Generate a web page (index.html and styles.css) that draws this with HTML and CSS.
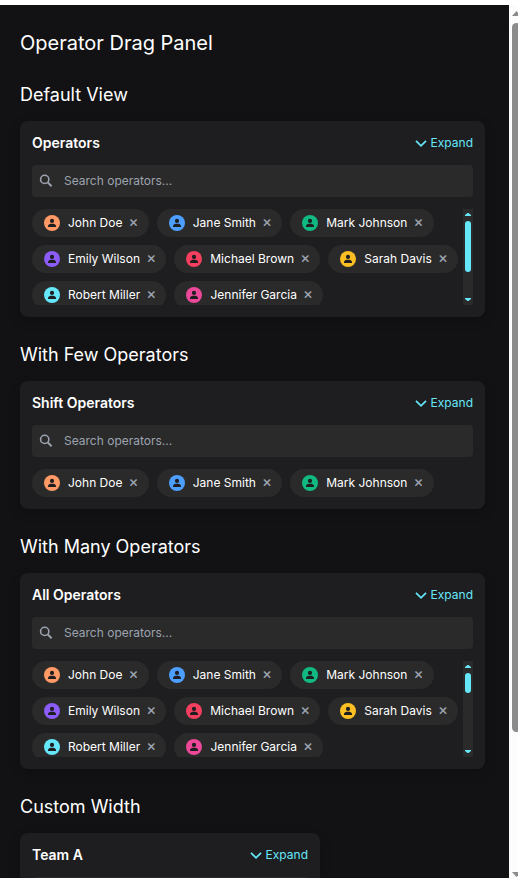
FILE: index.html
```html
<!DOCTYPE html>
<html lang="en">
<head>
<meta charset="utf-8">
<title>Operator Drag Panel</title>
<link rel="stylesheet" href="styles.css">
</head>
<body>
<svg class="defs" aria-hidden="true">
  <symbol id="chevron" viewBox="0 0 12 12"><path d="M1 3.8 6 8.8 11 3.8" fill="none" stroke="currentColor" stroke-width="1.7"/></symbol>
  <symbol id="search" viewBox="0 0 14 14"><circle cx="5.7" cy="5.4" r="4.1" fill="none" stroke="currentColor" stroke-width="1.6"/><path d="M8.7 8.4 12.6 12.3" stroke="currentColor" stroke-width="2"/></symbol>
  <symbol id="person" viewBox="0 0 16 16"><circle cx="8" cy="5.9" r="2.1" fill="#1e1e20"/><path d="M4 12V10.9C4 9.4 6 8.8 8 8.8s4 .6 4 2.1V12z" fill="#1e1e20"/></symbol>
</svg>
<div class="frame">
  <main class="page" id="page">
    <h1>Operator Drag Panel</h1>
  </main>
  <div class="page-scroll"><i class="arrow up"></i><i class="page-thumb"></i><i class="arrow down"></i></div>
</div>
<script src="app.js"></script>
</body>
</html>
```
FILE: styles.css
```css
* { box-sizing: border-box; }
html, body { height: 100%; overflow: hidden; }
body { margin: 0; padding-top: 5px; background: #fff; font-family: Inter, "Liberation Sans", sans-serif; color: #fff; }
.defs { display: none; }
.frame { display: flex; height: 873px; width: 524px; }
.page { width: 509px; padding: 20px 24px 0 20px; background: #121214; overflow: hidden; }
h1, h2 { margin: 0; font-weight: 400; }
h1 { font-size: 20px; line-height: 36px; margin-bottom: 20px; }
h2 { font-size: 18px; line-height: 28px; margin-bottom: 12px; }
.panel { height: 196px; margin-bottom: 24px; padding: 12px; border-radius: 8px; background: #1e1e20; box-shadow: 0 4px 12px rgba(0, 0, 0, .2); }
.panel.few { height: 128px; }
.panel.narrow { width: 300px; }
.head { display: flex; align-items: center; justify-content: space-between; height: 20px; margin-bottom: 12px; }
h3 { margin: 0; font-size: 14px; font-weight: 600; line-height: 20px; }
.expand { display: flex; align-items: center; gap: 4px; font-size: 12px; color: #66e7f9; }
.expand span, .search span, .chip span { line-height: 16px; }
.expand svg { width: 12px; height: 12px; }
.search { display: flex; align-items: center; height: 32px; margin-bottom: 12px; padding-left: 7px; border-radius: 4px; background: #2a2a2a; color: #9ca3af; font-size: 12px; gap: 11px; }
.search svg { width: 14px; height: 14px; }
.list { display: flex; height: 96px; overflow: hidden; }
.few .list { height: 28px; }
.chips { flex: 1; display: flex; flex-wrap: wrap; gap: 8px; align-content: flex-start; }
.chip { display: flex; align-items: center; height: 28px; padding: 0 12px; border-radius: 16px; background: #2a2a2a; font-size: 12px; white-space: nowrap; }
.avatar { width: 16px; height: 16px; margin-right: 8px; border-radius: 50%; }
.chip .close { display: flex; justify-content: center; width: 6.3px; margin-left: 8px; padding-bottom: 2px; color: #9ca3af; font-size: 15px; font-weight: 500; }
.scroll { width: 10px; background: #2a2a2a; padding: 4px 2px; display: flex; flex-direction: column; align-items: center; color: #66e7f9; }
.thumb { width: 6px; height: 51px; margin-top: 5px; border-radius: 3px; background: currentColor; }
.thumb.short { height: 20px; }
.arrow { width: 6px; height: 3px; background: currentColor; flex: none; }
.up { clip-path: polygon(42% 0, 58% 0, 100% 67%, 100% 100%, 0 100%, 0 67%); }
.down { clip-path: polygon(0 0, 100% 0, 100% 33%, 58% 100%, 42% 100%, 0 33%); margin-top: auto; }
.page-scroll { width: 15px; background: #fcfcfc; color: #8b8b8b; display: flex; flex-direction: column; align-items: center; padding: 6px 0 1px; }
.page-scroll .arrow { width: 9px; height: 5px; }
.page-scroll .up { clip-path: polygon(50% 0, 100% 100%, 0 100%); }
.page-scroll .down { clip-path: polygon(0 0, 100% 0, 50% 100%); }
.page-thumb { width: 9px; height: 709px; margin-top: 7px; border-radius: 4.5px; background: currentColor; }
```
FILE: app.js
```javascript
const people = [
  ["John Doe", "#ff9966"], ["Jane Smith", "#4d9fff"], ["Mark Johnson", "#10b981"],
  ["Emily Wilson", "#8b5cf6"], ["Michael Brown", "#f43f5e"], ["Sarah Davis", "#fbbf24"],
  ["Robert Miller", "#66e7f9"], ["Jennifer Garcia", "#ec4899"]
];
const sections = [
  ["Default View", "Operators", 8, "", ""],
  ["With Few Operators", "Shift Operators", 3, "few", null],
  ["With Many Operators", "All Operators", 8, "", "short"],
  ["Custom Width", "Team A", 3, "narrow", null]
];
const icon = (id) => `<svg><use href="#${id}"/></svg>`;
const chip = ([name, color]) => `<div class="chip"><svg class="avatar" style="background:${color}"><use href="#person"/></svg><span>${name}</span><span class="close">×</span></div>`;
document.getElementById("page").insertAdjacentHTML("beforeend", sections.map(([title, heading, count, kind, thumb]) => `
  <h2>${title}</h2>
  <section class="panel ${kind}">
    <div class="head"><h3>${heading}</h3><div class="expand">${icon("chevron")}<span>Expand</span></div></div>
    <div class="search">${icon("search")}<span>Search operators...</span></div>
    <div class="list"><div class="chips">${people.slice(0, count).map(chip).join("")}</div>
    ${thumb === null ? "" : `<div class="scroll"><i class="arrow up"></i><i class="thumb ${thumb}"></i><i class="arrow down"></i></div>`}</div>
  </section>`).join(""));
```
